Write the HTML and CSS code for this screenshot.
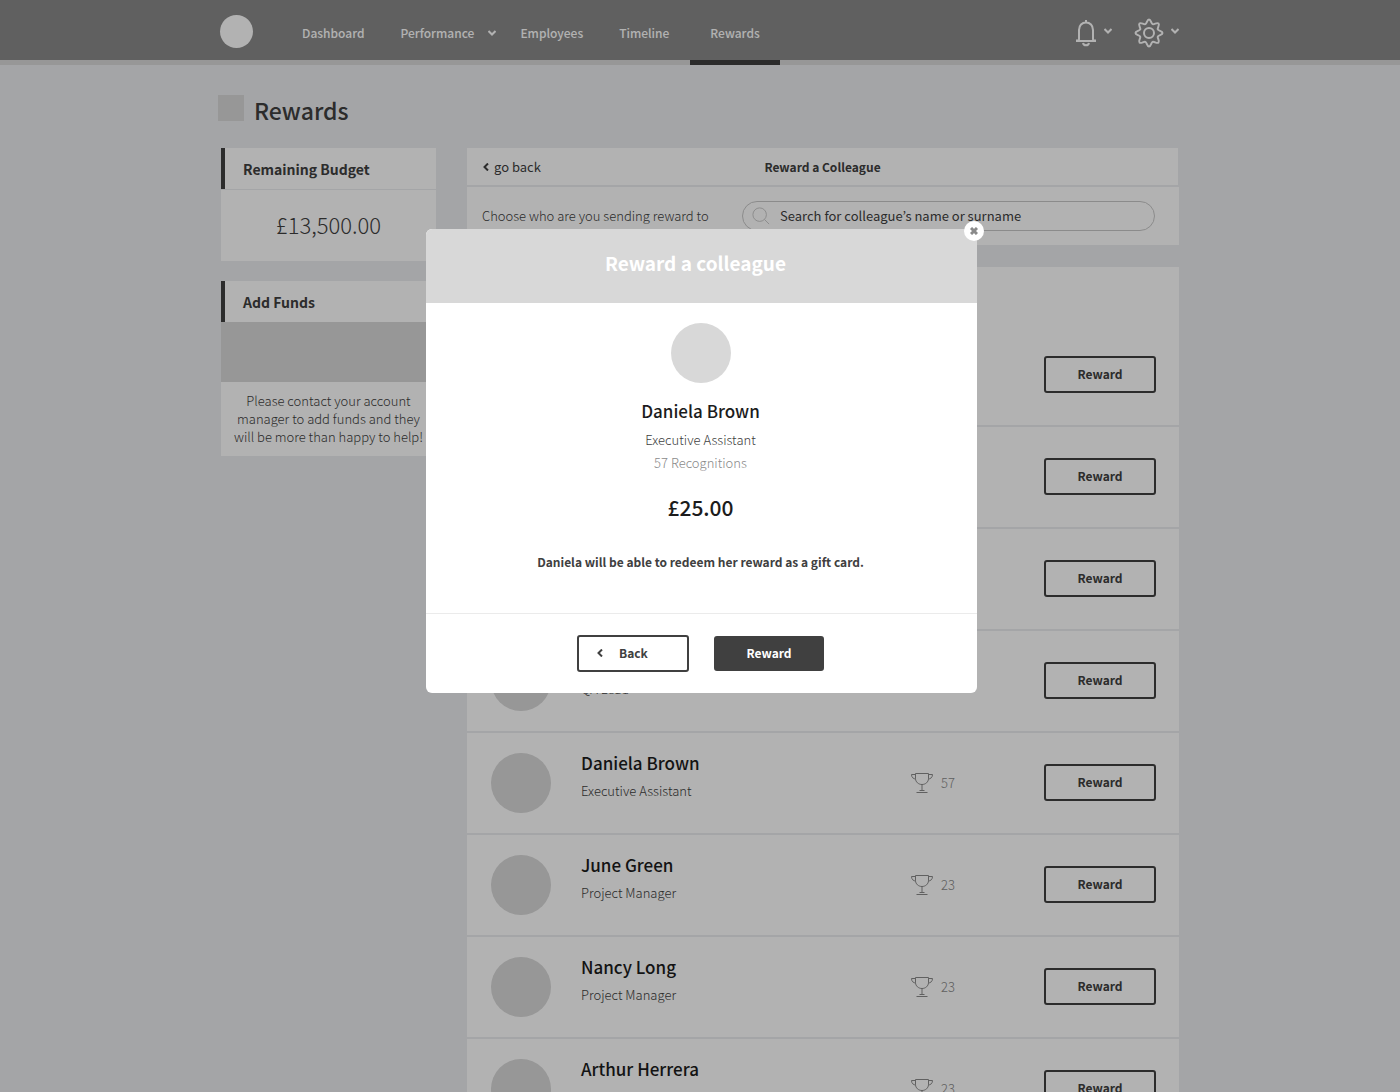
FILE: index.html
```html
<!DOCTYPE html>
<html lang="en">
<head>
<meta charset="utf-8">
<meta name="viewport" content="width=device-width, initial-scale=1">
<title>Rewards</title>
<link rel="stylesheet" href="styles.css">
</head>
<body>
<svg class="sprite" aria-hidden="true">
  <symbol id="trophy" viewBox="0 0 22 22"><path d="M4.500 1.500h13v5c0 3.500-3 6-6.500 6s-6.500-2.500-6.500-6zM4.500 2.500h-4c0 3 2 4.500 4.500 4.500M17.500 2.500h4c0 3-2 4.500-4.500 4.500M11 12.500v6M8.500 18.500h5M5.500 20.500h11"/></symbol>
  <symbol id="down" viewBox="0 0 8 6"><path d="M.5 1L4 4.500 7.500 1"/></symbol>
  <symbol id="left" viewBox="0 0 6 8"><path d="M5 .5L1.500 4 5 7.500"/></symbol>
</svg>

<header class="topbar">
  <div class="topbar-inner">
    <a class="logo" href="#" aria-label="Home"></a>
    <nav class="nav">
      <a class="nav-link" href="#">Dashboard</a>
      <a class="nav-link nav-more" href="#">Performance<svg class="chev"><use href="#down"/></svg></a>
      <a class="nav-link" href="#">Employees</a>
      <a class="nav-link" href="#">Timeline</a>
      <a class="nav-link active" href="#">Rewards</a>
    </nav>
    <div class="tools">
      <button class="tool" aria-label="Notifications">
        <svg class="bell" viewBox="0 0 22 28"><path d="M4 20.500V11c0-4.500 3-7.500 7-7.500s7 3 7 7.500v9.500M11 3.500V1M4 20c0 1-.5 1.500-2 1.500V22h18v-.5c-1.500 0-2-.5-2-1.500M8 24c.5 3 5.500 3 6 0"/></svg>
        <svg class="chev"><use href="#down"/></svg>
      </button>
      <button class="tool" aria-label="Settings">
        <svg class="gear" viewBox="0 0 30 30"><circle cx="15" cy="15" r="5"/><path d="M15 1.500C17 1.500 17 5.500 18.600 6.200C20.200 6.900 23 4 24.500 5.500C26 7 23.100 9.800 23.800 11.400C24.500 13 28.500 13 28.500 15C28.500 17 24.500 17 23.800 18.600C23.100 20.200 26 23 24.500 24.500C23 26 20.200 23.100 18.600 23.800C17 24.500 17 28.500 15 28.500C13 28.500 13 24.500 11.400 23.800C9.800 23.100 7 26 5.500 24.500C4 23 6.900 20.200 6.200 18.600C5.500 17 1.500 17 1.500 15C1.500 13 5.500 13 6.200 11.400C6.900 9.800 4 7 5.500 5.500C7 4 9.800 6.900 11.400 6.200C13 5.500 13 1.500 15 1.500Z"/></svg>
        <svg class="chev"><use href="#down"/></svg>
      </button>
    </div>
  </div>
</header>

<div class="title">
  <span class="title-icon"></span>
  <h1>Rewards</h1>
</div>

<div class="layout">
  <aside class="side">
    <section class="card">
      <h2 class="card-title">Remaining Budget</h2>
      <p class="budget">£13,500.00</p>
    </section>
    <section class="card">
      <h2 class="card-title">Add Funds</h2>
      <div class="banner"></div>
      <p class="help">Please contact your account manager to add funds and they will be more than happy to help!</p>
    </section>
  </aside>

  <main class="main">
    <div class="crumbs">
      <a class="go-back" href="#"><svg class="chev-left"><use href="#left"/></svg>go back</a>
      <h2 class="crumb-title">Reward a Colleague</h2>
    </div>
    <div class="chooser">
      <label for="search">Choose who are you sending reward to</label>
      <div class="search">
        <svg class="glass" viewBox="0 0 20 20"><circle cx="8.500" cy="8.500" r="7.500"/><path d="M14 14l5 5"/></svg>
        <input id="search" type="text" placeholder="Search for colleague’s name or surname">
      </div>
    </div>
    <ul class="people">
      <li class="person"><span class="avatar"></span><div class="who"></div><button class="btn">Reward</button></li>
      <li class="person"><span class="avatar"></span><div class="who"></div><button class="btn">Reward</button></li>
      <li class="person"><span class="avatar"></span><div class="who"></div><button class="btn">Reward</button></li>
      <li class="person"><span class="avatar"></span><div class="who"><div class="name"></div><p class="role">QA Lead</p></div><button class="btn">Reward</button></li>
      <li class="person"><span class="avatar"></span><div class="who"><h3 class="name">Daniela Brown</h3><p class="role">Executive Assistant</p></div><span class="count"><svg class="trophy"><use href="#trophy"/></svg>57</span><button class="btn">Reward</button></li>
      <li class="person"><span class="avatar"></span><div class="who"><h3 class="name">June Green</h3><p class="role">Project Manager</p></div><span class="count"><svg class="trophy"><use href="#trophy"/></svg>23</span><button class="btn">Reward</button></li>
      <li class="person"><span class="avatar"></span><div class="who"><h3 class="name">Nancy Long</h3><p class="role">Project Manager</p></div><span class="count"><svg class="trophy"><use href="#trophy"/></svg>23</span><button class="btn">Reward</button></li>
      <li class="person"><span class="avatar"></span><div class="who"><h3 class="name">Arthur Herrera</h3></div><span class="count"><svg class="trophy"><use href="#trophy"/></svg>23</span><button class="btn">Reward</button></li>
    </ul>
  </main>
</div>

<div class="overlay">
  <div class="modal" role="dialog" aria-modal="true" aria-labelledby="modal-title">
    <button class="close" aria-label="Close"><svg viewBox="0 0 8 8"><path d="M1 1l6 6M7 1L1 7"/></svg></button>
    <h2 class="modal-title" id="modal-title">Reward a colleague</h2>
    <div class="modal-body">
      <span class="avatar"></span>
      <h3 class="name">Daniela Brown</h3>
      <p class="role">Executive Assistant</p>
      <p class="recognitions">57 Recognitions</p>
      <p class="amount">£25.00</p>
      <p class="note">Daniela will be able to redeem her reward as a gift card.</p>
    </div>
    <div class="modal-actions">
      <button class="btn back"><svg class="chev-left"><use href="#left"/></svg>Back</button>
      <button class="btn primary">Reward</button>
    </div>
  </div>
</div>
</body>
</html>
```

FILE: styles.css
```css
* { box-sizing: border-box; }

body {
  margin: 0;
  height: 100vh;
  overflow: hidden;
  background: #ebedf0;
  color: #404040;
  font: 13px/18px "Noto Sans CJK KR", "Source Sans Pro", sans-serif;
}

h1, h2, h3, p, ul { margin: 0; padding: 0; }
a { color: inherit; text-decoration: none; }
button, input { font: inherit; color: inherit; }
svg { fill: none; stroke: currentColor; flex: none; }
.sprite { position: absolute; width: 0; height: 0; }

.chev { width: 8px; height: 6px; stroke-width: 2; }
.chev-left { width: 6px; height: 8px; stroke-width: 2; }

/* Top bar */
.topbar { background: #8a8a8a; border-bottom: 5px solid #d8d8d8; color: #fff; }
.topbar-inner { display: flex; max-width: 960px; height: 60px; margin: 0 auto; }
.logo { width: 33px; height: 33px; margin-top: 15px; border-radius: 50%; background: #fff; }
.nav { display: flex; gap: 6px; margin-left: 34px; }
.nav-link { display: flex; align-items: center; height: 65px; padding: 0 15px; font-size: 12px; font-weight: 500; }
.nav-more { gap: 14px; padding-right: 3px; }
.nav-link.active { padding: 5px 20px 0; border-bottom: 5px solid #404040; }
.tools { display: flex; gap: 22px; margin: 0 1px 0 auto; }
.tool { display: flex; align-items: center; gap: 7px; padding: 6px 0 0; border: 0; background: none; }
.tool .chev { margin-bottom: 4px; }
.bell { width: 22px; height: 28px; stroke-width: 2; }
.gear { width: 30px; height: 30px; stroke-width: 2; }

/* Page title */
.title { display: flex; gap: 10px; max-width: 964px; margin: 30px auto 0; }
.title-icon { width: 26px; height: 26px; background: #d8d8d8; }
.title h1 { padding-bottom: 2px; font-size: 23px; font-weight: 500; line-height: 30px; }

.layout { display: grid; grid-template-columns: 215px 1fr; gap: 31px; max-width: 958px; margin: 21px auto 0; }

/* Sidebar */
.side { display: flex; flex-direction: column; gap: 20px; }
.card { background: #fff; }
.card-title { padding: 1px 0 0 18px; border-left: 4px solid #404040; font-size: 14px; font-weight: 700; line-height: 40px; }
.budget { padding-bottom: 2px; border-top: 1px solid #ebedf0; font-size: 22px; font-weight: 300; line-height: 69px; text-align: center; }
.banner { height: 60px; background: #d8d8d8; }
.help { padding: 10px 12px; font-weight: 300; text-align: center; }

/* Main column */
.crumbs { display: grid; grid-template-columns: 1fr auto 1fr; align-items: center; height: 37px; margin-right: 1px; padding: 0 16px; background: #fff; }
.go-back { display: flex; align-items: center; gap: 5px; }
.crumb-title { font-size: 12px; font-weight: 700; line-height: 18px; }
.chooser { display: flex; align-items: center; justify-content: space-between; height: 58px; margin-top: 2px; padding: 0 24px 0 15px; background: #fff; font-weight: 300; }
.search { display: flex; align-items: center; gap: 10px; width: 413px; height: 30px; padding-left: 9px; border: 1px solid #c8c8c8; border-radius: 15px; }
.glass { width: 18px; height: 18px; color: #c4c4c4; }
.search input { flex: 1; min-width: 0; padding: 0; border: 0; outline: 0; background: none; font-size: 13px; font-weight: 400; }
.search input::placeholder { color: #404040; opacity: 1; }

.people { margin-top: 22px; padding-top: 58px; background: #fff; list-style: none; }
.person { display: flex; align-items: flex-start; height: 102px; padding: 20px 23px 0 24px; border-bottom: 2px solid #ebedf0; }
.person .btn { margin-top: 11px; }
.avatar { flex: none; width: 60px; height: 60px; border-radius: 50%; background: #d8d8d8; }
.who { flex: 1; height: 60px; margin-left: 30px; }
.name { height: 20px; color: #1c1c1c; font-size: 17px; font-weight: 500; line-height: 20px; }
.role { margin-top: 9px; font-weight: 300; line-height: 18px; }
.count { display: flex; align-items: center; gap: 8px; width: 133px; height: 60px; color: #8a8a8a; font-weight: 300; }
.trophy { width: 22px; height: 22px; }

.btn { display: flex; align-items: center; justify-content: center; width: 112px; height: 37px; padding: 0 0 2px; border: 2px solid #404040; border-radius: 3px; background: #fff; font-size: 12px; font-weight: 700; }

/* Dialog */
.overlay { position: fixed; inset: 0; display: flex; align-items: flex-start; justify-content: center; padding: 229px 0 0 3px; background: rgba(0, 0, 0, .3); }
.modal { position: relative; width: 551px; border-radius: 6px; background: #fff; }
.close { position: absolute; top: -8px; right: -7px; display: grid; place-items: center; width: 20px; height: 20px; padding: 0; border: 0; border-radius: 50%; background: #fff; color: #8a8a8a; }
.close svg { width: 8px; height: 8px; stroke-width: 3; }
.modal-title { padding: 0 12px 6px 0; border-radius: 6px 6px 0 0; background: #d8d8d8; color: #fff; font-size: 19px; font-weight: 700; line-height: 68px; text-align: center; }
.modal-body { display: flex; flex-direction: column; align-items: center; height: 310px; padding: 20px 2px 0 0; }
.modal-body .name { margin-top: 18px; }
.modal-body .role { margin-top: 10px; }
.recognitions { margin-top: 5px; color: #8a8a8a; font-weight: 300; }
.amount { margin-top: 19px; color: #1c1c1c; font-size: 21px; font-weight: 500; line-height: 32px; }
.note { margin-top: 30px; font-size: 12px; font-weight: 700; }
.modal-actions { display: flex; align-items: center; justify-content: center; gap: 25px; height: 80px; padding-right: 2px; border-top: 1px solid #ebebeb; }
.back { justify-content: flex-start; gap: 16px; padding-left: 18px; }
.primary { width: 110px; height: 35px; background: #404040; color: #fff; }
```
